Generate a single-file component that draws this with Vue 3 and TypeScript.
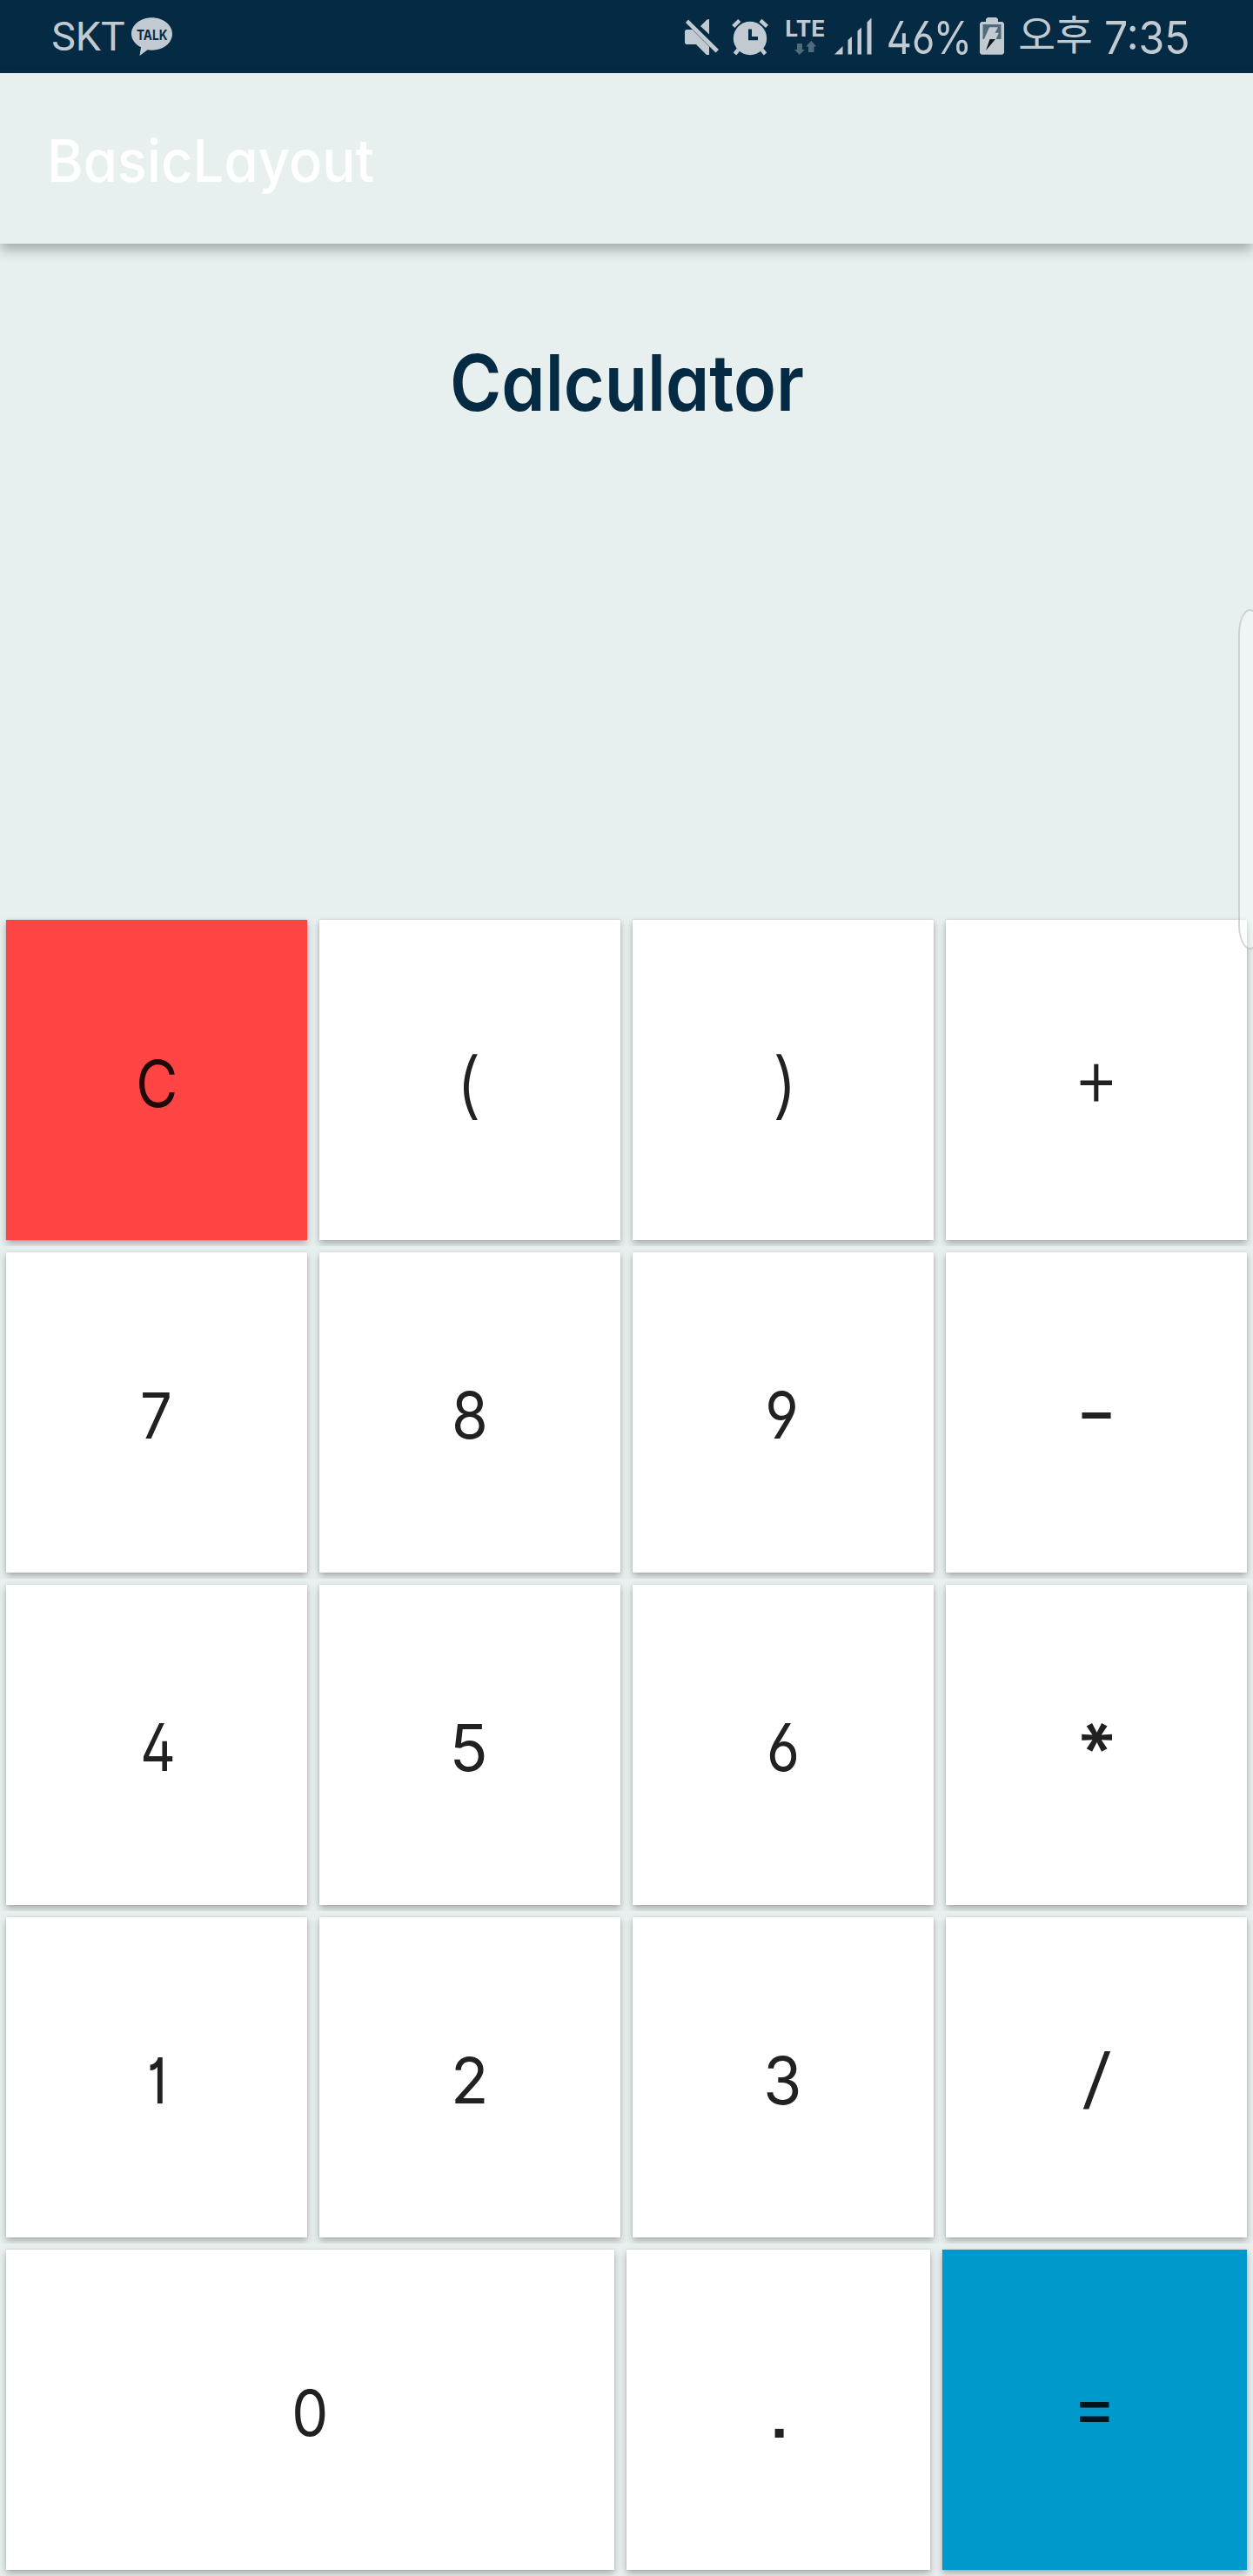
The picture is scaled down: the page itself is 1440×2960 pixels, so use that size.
<script setup lang="ts">
interface Key {
  label: string
  // glyph placement inside the key, relative to its centre
  transform: string
  weight?: number
  font?: 'inter' | 'arial'
  tone?: 'clear' | 'equals'
  grow?: 'zero' | 'dot' | 'eq'
}

const glyph = (x: number, y: number, sx: number, sy: number): string =>
  `translate(${x} ${y}) scale(${sx} ${sy})`

const rows: Key[][] = [
  [
    { label: 'C', transform: glyph(-23.8, 30.5, 0.659, 0.737), tone: 'clear' },
    { label: '(', transform: glyph(-16.6, 35.3, 0.864, 0.835), weight: 300 },
    { label: ')', transform: glyph(-12.7, 35.3, 0.855, 0.835), weight: 300 },
    { label: '+', transform: glyph(-26.5, 29.5, 0.806, 0.946), weight: 300 },
  ],
  [
    { label: '7', transform: glyph(-19.1, 30, 0.65, 0.73) },
    { label: '8', transform: glyph(-20.9, 30.3, 0.676, 0.745) },
    { label: '9', transform: glyph(-20.8, 30, 0.663, 0.745) },
    { label: '-', transform: glyph(-23.8, 30, 1.034, 0.85) },
  ],
  [
    { label: '4', transform: glyph(-18.7, 30, 0.628, 0.75) },
    { label: '5', transform: glyph(-23.5, 30.3, 0.727, 0.745) },
    { label: '6', transform: glyph(-18.9, 30.3, 0.654, 0.76) },
    {
      label: '*',
      transform: 'translate(0.4 -10.3) scale(0.85 0.82) rotate(90) translate(-25 52.5)',
      weight: 600,
    },
  ],
  [
    { label: '1', transform: glyph(-10.5, 30, 0.53, 0.73), weight: 500 },
    { label: '2', transform: glyph(-22, 30, 0.713, 0.73) },
    { label: '3', transform: glyph(-22.7, 30.6, 0.716, 0.75) },
    { label: '/', transform: glyph(-18.1, 28.4, 1.06, 0.764), weight: 300 },
  ],
  [
    { label: '0', transform: glyph(-21.8, 30.3, 0.666, 0.735), grow: 'zero' },
    { label: '.', transform: glyph(-14.1, 32, 1.05, 0.95), font: 'arial', grow: 'dot' },
    { label: '=', transform: glyph(-25.3, 24.8, 0.756, 0.79), tone: 'equals', grow: 'eq' },
  ],
]
</script>

<template>
  <div class="screen">
    <div class="status">
      <svg class="status-left" viewBox="0 0 240 84">
        <text class="roboto" x="59.3" y="58" font-size="46.4">SKT</text>
        <path
          d="M174.5 20.3c13 0 23.5 8.3 23.5 18.7s-10.500 18.700-23.500 18.700c-1.800 0-3.300-.100-4.900-.400L160.500 64l1.500-9.700c-6.500-3.300-11-8.900-11-15.300 0-10.400 10.500-18.700 23.500-18.700z"
        />
        <text class="inter talk" x="157" y="46" font-size="16.5" textLength="35.500" lengthAdjust="spacingAndGlyphs">TALK</text>
      </svg>
      <svg class="status-right" viewBox="0 0 680 84">
        <!-- sound off -->
        <path d="M27 35.500L28.500 34h7L55 53.500V63h-3L40 51H28.500L27 49.500zM45 30l7.500-7.500 2.500-.5v17.500zM31 22.500L66 57l-3.500 3.500L28 26z" />
        <!-- alarm -->
        <circle cx="102" cy="44" r="19.200" />
        <path class="stroke" d="M82.800 30.300l7-6.800M121.500 30.300l-7.500-6.800M88.500 57l-4 5M115.500 57l4 5" />
        <path class="dark" d="M100 33.500h4V42h7v4.200h-11z" />
        <!-- mobile data -->
        <text class="inter lte" x="142.300" y="41.500" font-size="25.500" textLength="46" lengthAdjust="spacingAndGlyphs">LTE</text>
        <path class="dim" d="M156 50h6v7h2.800L158.800 63 153 57h3zM172.300 46.700l6 6.800h-2.800V60H169v-6.500h-2.800z" />
        <!-- signal -->
        <path d="M199 62.500l9.500-9.500v9.500zM214.500 46l4.500-4v20.500h-4.500zM225.500 35.500l4.500-4v31h-4.500zM236.500 25.500l5-5v42h-5z" />
        <text class="inter" x="258.800" y="61.700" font-size="51.500" textLength="98.300" lengthAdjust="spacingAndGlyphs">46%</text>
        <!-- battery, charging -->
        <path d="M373 25v-3l2-2h10l2 2v3h5l2 2v34l-2 1.700h-24L366 61V27l2-2z" />
        <path class="dim" d="M369.500 28h21v17h-21z" />
        <path d="M377 31.300h10l-3.500 6.500h4.500L384.500 45H371z" />
        <path class="bolt" d="M377.500 45h6.500l-11 13z" />
        <text class="korean" x="410.200" y="57" font-size="46.500">오후</text>
        <text class="inter" x="509" y="61.700" font-size="51.500" textLength="98.700" lengthAdjust="spacingAndGlyphs">7:35</text>
      </svg>
    </div>

    <header class="appbar">
      <svg class="appbar-title" viewBox="0 0 500 196">
        <text class="inter appbar-text" x="54" y="125" font-size="67.400" textLength="376" lengthAdjust="spacingAndGlyphs">BasicLayout</text>
      </svg>
    </header>

    <main class="display">
      <svg class="heading" viewBox="0 0 1440 240">
        <text class="inter heading-text" x="517" y="192" font-size="89" textLength="407" lengthAdjust="spacingAndGlyphs">Calculator</text>
      </svg>
      <div class="edge-handle"></div>
    </main>

    <section class="pad">
      <div v-for="(row, i) in rows" :key="i" class="row">
        <button v-for="k in row" :key="k.label" class="key" :class="[k.tone, k.grow]" type="button">
          <svg class="label" viewBox="-60 -60 120 120">
            <text :class="k.font ?? 'inter'" :transform="k.transform" font-size="100" :font-weight="k.weight ?? 400">{{ k.label }}</text>
          </svg>
        </button>
      </div>
    </section>
  </div>
</template>

<style>
body {
  margin: 0;
  background: #e8f0ef;
}
</style>

<style scoped>
.screen {
  width: 1440px;
  height: 2960px;
  display: flex;
  flex-direction: column;
  background: #e8f0ef;
  overflow: hidden;
}
.inter {
  font-family: 'Inter', sans-serif;
  font-feature-settings: 'cv11', 'cv01', 'cv02', 'cv03', 'cv04';
}
.arial {
  font-family: 'Liberation Sans', sans-serif;
}
.roboto {
  font-family: 'Roboto', sans-serif;
}
.korean {
  font-family: 'Noto Sans CJK KR', sans-serif;
}
.appbar-text {
  font-weight: 450;
}
.heading-text {
  font-weight: 600;
}
.status {
  flex: none;
  height: 84px;
  display: flex;
  justify-content: space-between;
  background: #052b44;
  fill: #c1cad0;
}
.status-left {
  width: 240px;
  height: 84px;
}
.status-right {
  width: 680px;
  height: 84px;
}
.stroke {
  stroke: #c1cad0;
  stroke-width: 4.5;
}
.dark {
  fill: #052b44;
}
.dim {
  fill: #506b7c;
}
.bolt {
  fill: #101820;
}
.talk {
  fill: #052b44;
  font-weight: 700;
}
.lte {
  font-weight: 700;
}
.appbar {
  flex: none;
  height: 196px;
  background: #e8f0ef;
  box-shadow: 0 7px 14px rgba(0, 0, 0, 0.3);
}
.appbar-title {
  display: block;
  width: 500px;
  height: 196px;
  fill: #fff;
}
.display {
  flex: none;
  position: relative;
  height: 770px;
}
.heading {
  display: block;
  width: 1440px;
  height: 240px;
  fill: #052b44;
}
.edge-handle {
  position: absolute;
  z-index: 2;
  top: 420px;
  right: -10px;
  width: 23px;
  height: 387px;
  border: 2px solid rgba(150, 158, 160, 0.4);
  border-radius: 16px / 34px;
  background: rgba(250, 252, 252, 0.4);
}
.pad {
  flex: none;
  display: flex;
  flex-direction: column;
}
.row {
  display: flex;
  gap: 14px;
  padding: 7px;
  height: 368px;
  overflow: hidden;
}
.key {
  flex: 0 0 346px;
  display: flex;
  align-items: center;
  justify-content: center;
  padding: 0;
  border: 0;
  background: #fff;
  fill: #212121;
  box-shadow: 0 4px 8px rgba(0, 0, 0, 0.28), 0 0 2px rgba(0, 0, 0, 0.12);
}
.clear {
  background: #ff4444;
  fill: #220909;
}
.equals {
  background: #0099cc;
  fill: #00141b;
}
.zero {
  flex-basis: 699px;
}
.dot {
  flex-basis: 349px;
}
.eq {
  flex-basis: 350px;
}
.label {
  width: 120px;
  height: 120px;
  overflow: visible;
}
</style>
